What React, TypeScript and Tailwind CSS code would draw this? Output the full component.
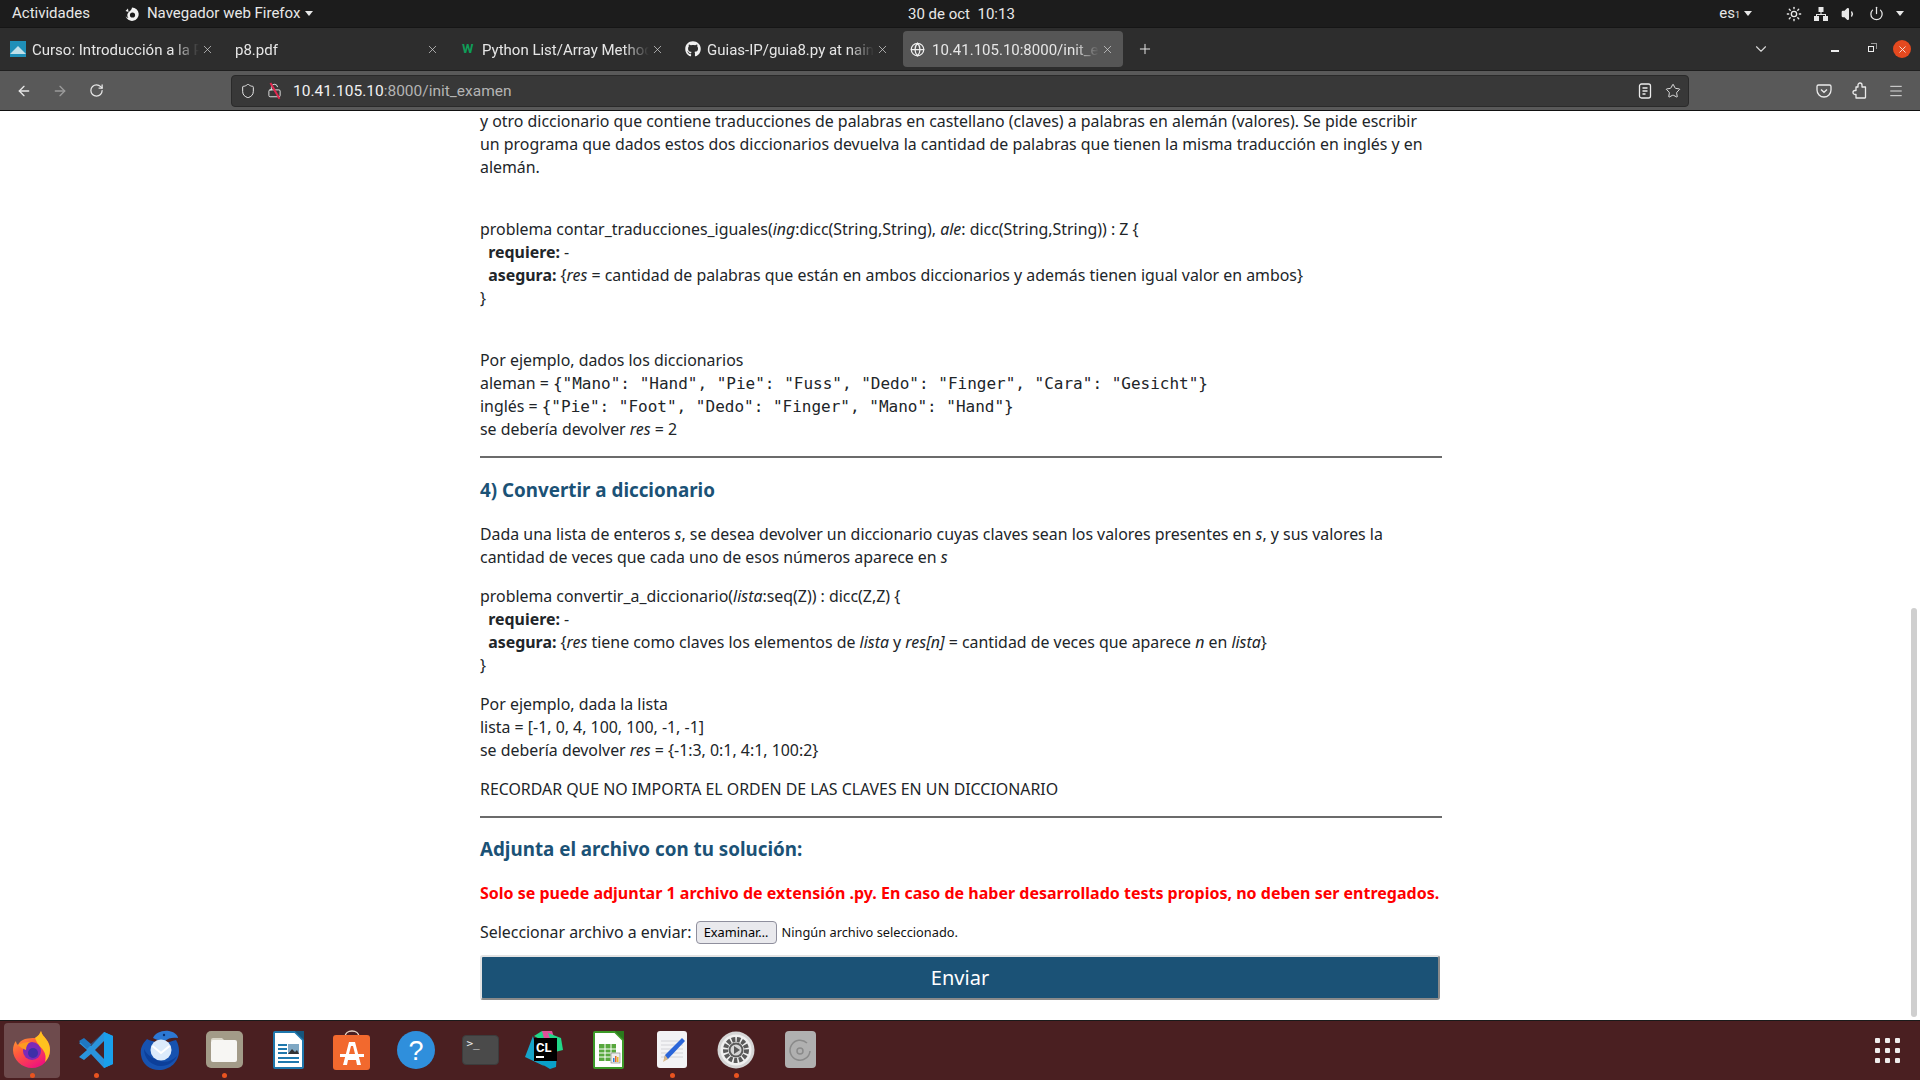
import { ArrowLeft, ArrowRight, ChevronDown, Globe, LockOpen, Menu, Plus, Power, RotateCw, Shield, Star, Sun, Volume1, X } from "lucide-react";
import { FaGithub } from "react-icons/fa";
import type { ReactNode } from "react";

const ui = "font-['Roboto','Liberation_Sans',sans-serif]";
const fade = "[mask-image:linear-gradient(to_right,black_85%,transparent)]";

function Caret({ className = "" }: { className?: string }) {
  return <span className={`w-0 h-0 border-l-[4px] border-r-[4px] border-t-[5px] border-l-transparent border-r-transparent border-t-[#e8e8e8] ${className}`} />;
}

function NetworkIcon() {
  return (
    <svg width="16" height="16" viewBox="0 0 16 16" fill="#e8e8e8">
      <rect x="5.500" y="1" width="5" height="5" />
      <rect x="1" y="10" width="5" height="5" />
      <rect x="10" y="10" width="5" height="5" />
      <path d="M7.500 6h1v2h4.500v2h-1V9h-8v1H3V8h4.500z" />
    </svg>
  );
}

function TopBar() {
  return (
    <div className="h-[27px] shrink-0 bg-[#1c1c1c] text-[#e8e8e8] text-[15px] flex items-center relative">
      <span className="ml-3">Actividades</span>
      <svg className="ml-[34px]" width="16" height="16" viewBox="0 0 16 16">
        <path d="M8 1.500a6.700 6.700 0 1 1-6.500 8.300C2 11 3 12 4.500 12 3.500 11 3 9.500 3.500 8c.5-1.500 2-2.500 3-3.500C7.500 3.500 8 2.500 8 1.500z" fill="#f2f2f2" />
        <circle cx="8.500" cy="9" r="2.600" fill="#1c1c1c" />
        <path d="M1.500 5 4 2.500 4.500 6z" fill="#f2f2f2" />
      </svg>
      <span className="ml-[7px]">Navegador web Firefox</span>
      <Caret className="ml-[5px]" />
      <span className="absolute left-[908px] top-[3px]">30 de oct&nbsp; 10:13</span>
      <span className="ml-auto">es<sub className="text-[9px] bottom-0">1</sub></span>
      <Caret className="ml-[4px]" />
      <Sun size={16} className="ml-[34px]" />
      <span className="ml-[11px] flex"><NetworkIcon /></span>
      <Volume1 size={16} fill="#e8e8e8" className="ml-[12px]" />
      <Power size={15} className="ml-[12px]" />
      <Caret className="ml-[12px] mr-[16px]" />
    </div>
  );
}

function Tab({ icon, title, active = false }: { icon?: ReactNode; title: string; active?: boolean }) {
  return (
    <div className={`w-[220px] pl-[7px] pr-[9px] h-9 flex items-center shrink-0 rounded-[4px] ${active ? "bg-[#565656]" : ""}`}>
      {icon && <span className="w-[22px] shrink-0 flex">{icon}</span>}
      <span className={`flex-1 min-w-0 pt-[2px] whitespace-nowrap overflow-hidden text-[15px] text-[#e6e6e6] ${fade}`}>{title}</span>
      <X size={13} strokeWidth={1.3} className="text-[#d8d8d8] shrink-0 ml-[2px]" />
    </div>
  );
}

function TabBar() {
  return (
    <div className={`h-[43px] shrink-0 bg-[#2d2d2d] border-t border-[#151515] flex items-center gap-[5px] pl-[3px] ${ui}`}>
      <Tab
        title="Curso: Introducción a la Programación"
        icon={
          <svg width="16" height="16" viewBox="0 0 16 16">
            <rect width="16" height="16" fill="#1f8fb8" />
            <path d="M0 13 8 5l8 8z" fill="#bfe0ea" />
          </svg>
        }
      />
      <Tab title="p8.pdf" />
      <Tab
        title="Python List/Array Methods"
        icon={<span className="pl-[2px] text-[13px] leading-4 font-bold text-[#0f9d58]">W</span>}
      />
      <Tab title="Guias-IP/guia8.py at nain" icon={<FaGithub size={16} className="text-[#f0f0f0]" />} />
      <Tab active title="10.41.105.10:8000/init_examen" icon={<Globe size={15} className="text-[#eee]" />} />
      <Plus size={16} strokeWidth={1.5} className="ml-[9px] text-[#e6e6e6]" />
      <ChevronDown size={18} strokeWidth={1.5} className="ml-auto text-[#d8d8d8]" />
      <span className="ml-[56px] mt-[4px] w-2 h-[2px] bg-[#eee]" />
      <span className="ml-[24px] relative w-[6px] h-[6px] border border-[#eee]">
        <span className="absolute left-[2px] top-[-4px] w-[6px] h-[6px] border-t border-r border-[#999]" />
      </span>
      <span className="ml-[14px] mr-[9px] w-[18px] h-[18px] rounded-full bg-[#e4491f] flex items-center justify-center">
        <X size={11} strokeWidth={2} className="text-[#f8e6de]" />
      </span>
    </div>
  );
}

function PocketIcon() {
  return (
    <svg width="16" height="16" viewBox="0 0 16 16" fill="none" stroke="#ebebeb" strokeWidth="1.300">
      <path d="M2.500 2h11A1.500 1.500 0 0 1 15 3.500V7A7 7 0 0 1 1 7V3.500A1.500 1.500 0 0 1 2.500 2z" />
      <path d="m5 6.500 3 2.800 3-2.800" />
    </svg>
  );
}

function ReaderIcon() {
  return (
    <svg width="14" height="16" viewBox="0 0 14 16" fill="none" stroke="#ebebeb" strokeWidth="1.300">
      <rect x="1.500" y="1" width="11" height="14" rx="2" />
      <path d="M4.500 5h5M4.500 8h5M4.500 11h3" />
    </svg>
  );
}

function ExtensionIcon() {
  return (
    <svg width="16" height="17" viewBox="0 0 16 17" fill="none" stroke="#ebebeb" strokeWidth="1.300" strokeLinejoin="round">
      <path d="M6 5V3a2 2 0 0 1 4 0v2h3.500v10.500a.5.5 0 0 1-.5.5H4v-3.500H3a2 2 0 0 1 0-4h1V5z" />
    </svg>
  );
}

function Toolbar() {
  return (
    <div className={`h-[41px] shrink-0 bg-[#595959] border-t border-[#1f1f1f] border-b-[#111] border-b flex items-center text-[#e8e8e8] ${ui}`}>
      <ArrowLeft size={16} className="ml-[16px]" />
      <ArrowRight size={16} className="ml-[20px] text-[#9b9b9b]" />
      <RotateCw size={15} className="ml-[21px]" />
      <div className="ml-[127px] w-[1458px] h-8 rounded-[4px] bg-[#383838] border border-[#2a2a2a] flex items-center">
        <Shield size={16} className="ml-[8px]" strokeWidth={1.5} />
        <span className="relative ml-[11px] flex">
          <LockOpen size={15} strokeWidth={1.5} />
          <span className="absolute left-[7px] top-[-1px] h-[18px] w-[1.5px] bg-[#e22850] -rotate-[30deg]" />
        </span>
        <span className="ml-[11px] pt-[3px] text-[15.500px] text-[#f2f2f2]">
          10.41.105.10<span className="text-[#b4b4b4]">:8000/init_examen</span>
        </span>
        <span className="ml-auto flex"><ReaderIcon /></span>
        <Star size={16} strokeWidth={1.4} className="ml-[13px] mr-[7px]" />
      </div>
      <span className="ml-[127px] flex"><PocketIcon /></span>
      <span className="ml-[20px] flex"><ExtensionIcon /></span>
      <Menu size={16} strokeWidth={1.4} className="ml-[20px]" />
    </div>
  );
}

const code = "font-['DejaVu_Sans_Mono','Liberation_Mono',monospace] text-[16px]";
const indent = "\u00a0\u00a0";

function Line({ children, className = "" }: { children: ReactNode; className?: string }) {
  return <div className={`h-[23px] leading-[23px] whitespace-pre ${className}`}>{children}</div>;
}

function Document() {
  return (
    <div className="flex-1 min-h-0 bg-white relative overflow-hidden">
      <div className="ml-[480px] -mt-px w-[962px] text-[15.900px] text-[#212529] font-['Noto_Sans','Open_Sans',sans-serif]">
        <Line>y otro diccionario que contiene traducciones de palabras en castellano (claves) a palabras en alemán (valores). Se pide escribir</Line>
        <Line>un programa que dados estos dos diccionarios devuelva la cantidad de palabras que tienen la misma traducción en inglés y en</Line>
        <Line>alemán.</Line>

        <Line className="mt-[39px]">problema contar_traducciones_iguales(<i>ing</i>:dicc(String,String), <i>ale</i>: dicc(String,String)) : Z {"{"}</Line>
        <Line>{indent}<b>requiere:</b> -</Line>
        <Line>{indent}<b>asegura:</b> {"{"}<i>res</i> = cantidad de palabras que están en ambos diccionarios y además tienen igual valor en ambos{"}"}</Line>
        <Line>{"}"}</Line>

        <Line className="mt-[39px]">Por ejemplo, dados los diccionarios</Line>
        <Line>aleman = <span className={code}>{'{"Mano": "Hand", "Pie": "Fuss", "Dedo": "Finger", "Cara": "Gesicht"}'}</span></Line>
        <Line>inglés = <span className={code}>{'{"Pie": "Foot", "Dedo": "Finger", "Mano": "Hand"}'}</span></Line>
        <Line>se debería devolver <i>res</i> = 2</Line>

        <hr className="mt-[15px] border-0 border-t-2 border-[#6b6b6b]" />
        <h2 className="mt-[19px] h-[26px] leading-[26px] text-[18.800px] font-bold text-[#1b5276]">4) Convertir a diccionario</h2>

        <Line className="mt-[20px]">Dada una lista de enteros <i>s</i>, se desea devolver un diccionario cuyas claves sean los valores presentes en <i>s</i>, y sus valores la</Line>
        <Line>cantidad de veces que cada uno de esos números aparece en <i>s</i></Line>

        <Line className="mt-[16px]">problema convertir_a_diccionario(<i>lista</i>:seq(Z)) : dicc(Z,Z) {"{"}</Line>
        <Line>{indent}<b>requiere:</b> -</Line>
        <Line>{indent}<b>asegura:</b> {"{"}<i>res</i> tiene como claves los elementos de <i>lista</i> y <i>res[n]</i> = cantidad de veces que aparece <i>n</i> en <i>lista</i>{"}"}</Line>
        <Line>{"}"}</Line>

        <Line className="mt-[16px]">Por ejemplo, dada la lista</Line>
        <Line>lista = [-1, 0, 4, 100, 100, -1, -1]</Line>
        <Line>se debería devolver <i>res</i> = {"{-1:3, 0:1, 4:1, 100:2}"}</Line>

        <Line className="mt-[16px]">RECORDAR QUE NO IMPORTA EL ORDEN DE LAS CLAVES EN UN DICCIONARIO</Line>

        <hr className="mt-[15px] border-0 border-t-2 border-[#6b6b6b]" />
        <h2 className="mt-[18px] h-[26px] leading-[26px] text-[18.800px] font-bold text-[#1b5276]">Adjunta el archivo con tu solución:</h2>

        <Line className="mt-[20px] text-[16px] font-bold text-[#ff0000]">Solo se puede adjuntar 1 archivo de extensión .py. En caso de haber desarrollado tests propios, no deben ser entregados.</Line>

        <div className="mt-[16px] h-[23px] flex items-center whitespace-pre">
          <span>Seleccionar archivo a enviar: </span>
          <button type="button" className="w-[81px] h-[23px] rounded-[4px] border border-[#8f8f9d] bg-[#e9e9ed] text-[12.800px] text-black leading-none">Examinar…</button>
          <span className="ml-[5px] text-[12.800px] text-[#111]">Ningún archivo seleccionado.</span>
        </div>

        <button type="button" className="mt-[11px] w-[960px] h-[45px] rounded-[3px] bg-[#1b5276] border-2 border-t-[#e3e3e3] border-l-[#e3e3e3] border-r-[#8a8a8a] border-b-[#8a8a8a] text-white text-[20px]">Enviar</button>
      </div>
      <div className="absolute right-[3px] top-[497px] bottom-[3px] w-[6px] rounded-full bg-[#cfcfcf]" />
    </div>
  );
}

function Firefox() {
  return (
    <svg width="40" height="40" viewBox="0 0 40 40">
      <defs>
        <linearGradient id="ff1" x1="0" y1="0" x2="0.6" y2="1">
          <stop offset="0" stopColor="#ffb52e" />
          <stop offset="0.5" stopColor="#ff5a3c" />
          <stop offset="1" stopColor="#f0137c" />
        </linearGradient>
      </defs>
      <path d="M29 1c1 4 3 5 5 8 3 4 4 7 4 11 0 10-8 18-18 18S1 30 1 20c0-3 1-7 3-9 0 2 1 3 2 4 1-3 4-5 7-6 4-1 7-1 10-1 3-2 5-4 6-7z" fill="url(#ff1)" />
      <path d="M29 1c1 4 3 5 5 8 3 4 4 7 4 11 0 5-2 9-5 12 1-4 1-8-2-12-2-3-6-6-8-12 3-2 5-4 6-7z" fill="#ffc21f" />
      <circle cx="20" cy="21" r="9" fill="#7c2ab8" />
      <circle cx="21" cy="23" r="5" fill="#3c2fa8" />
      <path d="M6 15c3-2 8-3 12-3-3 2-4 5-4 8-3-1-6-3-8-5z" fill="#ff9a1f" />
    </svg>
  );
}

function VsCode() {
  return (
    <svg width="38" height="38" viewBox="0 0 38 38">
      <path d="M27 1 36 5v28l-9 4-13-14-7 6-5-3 8-7-8-7 5-3 7 6z" fill="#2a94dd" />
      <path d="M27 1 14 13l-7-6-5 3 8 8z" fill="#1f77c2" />
      <path d="M27 10v18l-9-9z" fill="#4a2226" />
      <path d="M27 1 36 5v28l-9 4z" fill="#19a0ec" />
    </svg>
  );
}

function Thunderbird() {
  return (
    <svg width="42" height="40" viewBox="0 0 42 40">
      <path d="M8 9C3 14 1 19 2 25c1 9 9 15 18 15 11 0 20-8 20-19 0-4-1-8-3-11-4 1-8 2-11 4-6-2-13-2-18-5z" fill="#1652b0" />
      <path d="M14 8c2-5 9-8 16-7 5 1 9 4 9 7-5-1-10 0-13 3-4 0-9-1-12-3z" fill="#2c78d4" />
      <circle cx="25" cy="5" r="1.200" fill="#0b2f6e" />
      <path d="M5 19c0 9 7 17 17 17 7 0 13-4 16-10-5 5-11 7-17 5-7-2-13-6-16-12z" fill="#0c3f9a" />
      <circle cx="22" cy="20" r="10.500" fill="#dcebfb" />
      <path d="m13.500 16 8.500 7 8.500-7" fill="none" stroke="#fff" strokeWidth="2" />
    </svg>
  );
}

function Files() {
  return (
    <div className="w-[37px] h-[37px] rounded-[5px] bg-[#a39b88] flex items-center justify-center">
      <svg width="28" height="28" viewBox="0 0 28 28">
        <path d="M1 4a2 2 0 0 1 2-2h9l3 3H1z" fill="#d9d5c8" />
        <rect x="1" y="4" width="26" height="22" rx="2" fill="#f7f6f3" />
      </svg>
    </div>
  );
}

function Writer() {
  return (
    <svg width="31" height="38" viewBox="0 0 31 38">
      <path d="M1 2a1 1 0 0 1 1-1h20l8 8v27a1 1 0 0 1-1 1H2a1 1 0 0 1-1-1z" fill="#fff" stroke="#1f78ad" strokeWidth="2" />
      <path d="M22 0h9v9z" fill="#15557c" />
      <rect x="5" y="13" width="9" height="2" fill="#1f78ad" />
      <rect x="5" y="17" width="9" height="2" fill="#1f78ad" />
      <rect x="5" y="21" width="9" height="2" fill="#1f78ad" />
      <rect x="15" y="13" width="11" height="10" fill="#7fa8c4" />
      <path d="m15 23 4-5 3 3 2-2 2 4z" fill="#333" />
      <rect x="5" y="26" width="21" height="2" fill="#1f78ad" />
      <rect x="5" y="30" width="21" height="2" fill="#1f78ad" />
    </svg>
  );
}

function Store() {
  return (
    <svg width="38" height="40" viewBox="0 0 38 40">
      <path d="M12 7c0-8 14-8 14 0" fill="none" stroke="#e8d5c5" strokeWidth="1.500" />
      <rect y="5" width="37" height="35" rx="3" fill="#f2692e" />
      <path d="M16 12h6l6 23h-4l-1-5H15l-1 5h-4z" fill="#fff" />
      <rect x="7" y="24" width="24" height="3" fill="#fff" />
      <path d="M18 16h2l2 8h-6z" fill="#f2692e" />
    </svg>
  );
}

function Help() {
  return (
    <svg width="38" height="38" viewBox="0 0 38 38">
      <circle cx="19" cy="19" r="19" fill="#2f8fdc" />
      <text x="19" y="29" textAnchor="middle" fontSize="27" fill="#fff" fontFamily="Liberation Sans">?</text>
    </svg>
  );
}

function Terminal() {
  return (
    <div className="w-[37px] h-[30px] rounded-[4px] bg-[#4a4a4a] border border-[#3c3c3c] pl-[4px] pt-[1px] font-['DejaVu_Sans_Mono',monospace] text-[11px] leading-[14px] text-[#eee]">{">_"}</div>
  );
}

function Clion() {
  return (
    <svg width="38" height="38" viewBox="0 0 38 38">
      <path d="M9 5 17 0l6 3-3 8z" fill="#21d789" />
      <path d="M17 0h10l2 6-9 5z" fill="#e0509a" />
      <path d="M23 2 36 7l2 12-8 2z" fill="#21d789" />
      <path d="M0 26 8 5l5 22 6 8z" fill="#17a3c9" />
      <path d="m8 28 24-8-1 16-6 2z" fill="#09a0c9" />
      <rect x="9" y="7" width="23" height="23" fill="#000" />
      <text x="11" y="21" fontSize="13" fontWeight="700" fill="#fff" fontFamily="Roboto">CL</text>
      <rect x="11" y="25" width="8" height="2" fill="#fff" />
    </svg>
  );
}

function Calc() {
  return (
    <svg width="31" height="38" viewBox="0 0 31 38">
      <path d="M1 2a1 1 0 0 1 1-1h20l8 8v27a1 1 0 0 1-1 1H2a1 1 0 0 1-1-1z" fill="#fff" stroke="#3c9a28" strokeWidth="2" />
      <path d="M22 0h9v9z" fill="#2a7a1c" />
      <rect x="6" y="13" width="17" height="17" fill="#58a83e" />
      <path d="M6 18h17M6 22h17M6 26h17M12 13v17M18 13v17" stroke="#fff" strokeWidth="1" />
      <rect x="18" y="22" width="9" height="10" fill="#eee" stroke="#666" strokeWidth=".5" />
      <rect x="20" y="27" width="1.500" height="4" fill="#2f7fd6" />
      <rect x="22" y="25" width="1.500" height="6" fill="#e8682a" />
      <rect x="24" y="26" width="1.500" height="5" fill="#e8b92a" />
    </svg>
  );
}

function Gedit() {
  return (
    <svg width="31" height="38" viewBox="0 0 31 38">
      <rect width="30" height="37" rx="3" fill="#f3f3f5" />
      <path d="M4 10h22M4 14h22M4 18h22M4 22h22M4 26h22" stroke="#d3d3d8" strokeWidth="1" />
      <path d="m25 7 3 3L11 28l-4 1 1-5z" fill="#2b66d9" />
      <path d="m8 24 3 4-5 3z" fill="#d8b98c" />
    </svg>
  );
}

function Settings() {
  return (
    <svg width="38" height="38" viewBox="0 0 38 38">
      <circle cx="19" cy="19" r="18.500" fill="#d5d5d5" />
      <circle cx="19" cy="19" r="15.500" fill="#f0f0f0" />
      <circle cx="19" cy="19" r="10.500" fill="none" stroke="#5a5a5a" strokeWidth="5" strokeDasharray="3.500 1.500" />
      <circle cx="19" cy="19" r="7.500" fill="#5a5a5a" />
      <circle cx="19" cy="19" r="5.500" fill="#d5d5d5" />
      <path d="m17 15 6 4-6 4z" fill="#5a5a5a" />
    </svg>
  );
}

function Disk() {
  return (
    <div className="w-[31px] h-[37px] rounded-[4px] bg-[#b0b0b0] flex items-center justify-center">
      <svg width="24" height="24" viewBox="0 0 24 24" fill="none" stroke="#8a8a8a" strokeWidth="1.500">
        <circle cx="12" cy="13" r="3" />
        <path d="M19 5a10 10 0 1 0 3 8" />
      </svg>
    </div>
  );
}

const apps: { icon: ReactNode; running?: boolean; active?: boolean }[] = [
  { icon: <Firefox />, running: true, active: true },
  { icon: <VsCode />, running: true },
  { icon: <Thunderbird /> },
  { icon: <Files />, running: true },
  { icon: <Writer /> },
  { icon: <Store /> },
  { icon: <Help /> },
  { icon: <Terminal /> },
  { icon: <Clion /> },
  { icon: <Calc /> },
  { icon: <Gedit />, running: true },
  { icon: <Settings />, running: true },
  { icon: <Disk /> },
];

function Dock() {
  return (
    <div className="h-[60px] shrink-0 bg-[#4a1f21] border-t border-[#1a1a1a] flex items-center">
      {apps.map((app, i) => (
        <div key={i} className="w-[64px] h-full shrink-0 flex items-center justify-center relative">
          {app.active && <div className="absolute left-[4px] right-[4px] top-[2px] bottom-[2px] rounded-[4px] bg-white/20" />}
          <div className="relative flex -mt-[2px]">{app.icon}</div>
          {app.running && <span className="absolute bottom-[2px] left-[30px] w-[5px] h-[5px] rounded-full bg-[#e95420]" />}
        </div>
      ))}
      <div className="ml-auto mr-[20px] grid grid-cols-3 gap-[5px]">
        {Array.from({ length: 9 }).map((_, i) => (
          <span key={i} className="w-[5px] h-[5px] rounded-[1px] bg-[#f0eded]" />
        ))}
      </div>
    </div>
  );
}

export default function App() {
  return (
    <div className={`w-screen h-screen overflow-hidden flex flex-col ${ui}`}>
      <TopBar />
      <TabBar />
      <Toolbar />
      <Document />
      <Dock />
    </div>
  );
}
